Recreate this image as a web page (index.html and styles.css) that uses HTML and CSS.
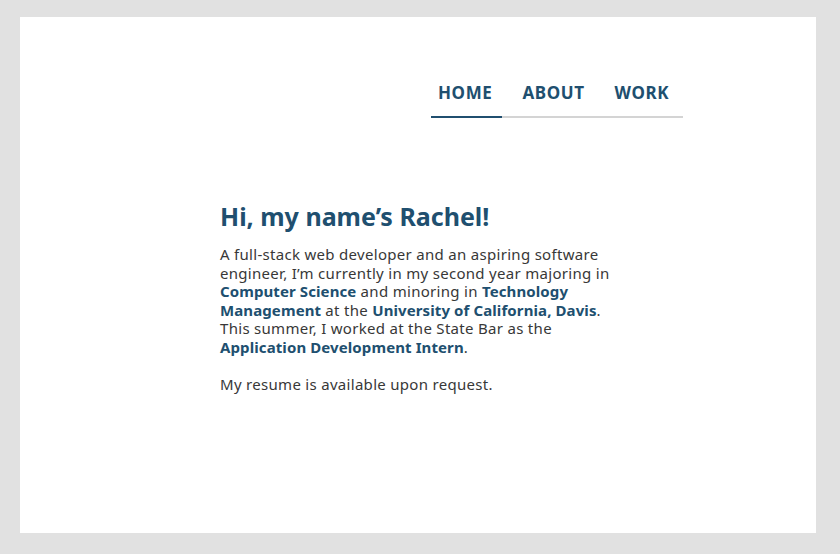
FILE: index.html
```html
<!DOCTYPE html>
<html>
<head>
<meta charset="utf-8">
<link rel="stylesheet" href="styles.css">
</head>
<body>
<div class="card">
  <nav class="nav">
    <a class="nav-item active" href="#">HOME</a>
    <a class="nav-item" href="#">ABOUT</a>
    <a class="nav-item" href="#">WORK</a>
  </nav>
  <main class="intro">
    <h1 class="title">Hi, my name’s Rachel!</h1>
    <p class="text">A full-stack web developer and an aspiring software engineer, I’m currently in my second year majoring in <b class="hl">Computer Science</b> and minoring in <b class="hl">Technology Management</b> at the <b class="hl">University of California, Davis</b>. This summer, I worked at the State Bar as the <b class="hl">Application Development Intern</b>.</p>
    <p class="text">My resume is available upon request.</p>
  </main>
</div>
</body>
</html>
```
FILE: styles.css
```css
html, body { margin: 0; padding: 0; }
body {
  background: #e1e1e1;
  padding: 17px 24px 21px 20px;
  font-family: "Noto Sans", sans-serif;
  color: #383838;
}
.card {
  background: #fff;
  height: 516px;
  box-sizing: border-box;
  padding: 64px 0 0 200px;
}
.nav {
  display: flex;
  margin-left: 211px;
  width: 252px;
  border-bottom: 2px solid #d4d4d4;
}
.nav-item {
  display: block;
  padding: 0 10px 12px 7px;
  font-size: 17px;
  font-weight: 700;
  color: #204f6f;
  text-decoration: none;
  letter-spacing: 0.6px;
  margin-bottom: -2px;
  border-bottom: 2px solid transparent;
}
.nav-item + .nav-item { padding-left: 20px; }
.nav-item.active { border-bottom-color: #204f6f; }
.intro { width: 405px; margin-top: 83px; }
.title {
  margin: 0 0 14px;
  font-size: 25px;
  font-weight: 700;
  color: #204f6f;
  line-height: 30px;
}
.text {
  margin: 0 0 18.6px;
  font-size: 15px;
  letter-spacing: 0.3px;
  line-height: 18.6px;
}
.hl { color: #204f6f; font-weight: 700; letter-spacing: 0.1px; }
```
